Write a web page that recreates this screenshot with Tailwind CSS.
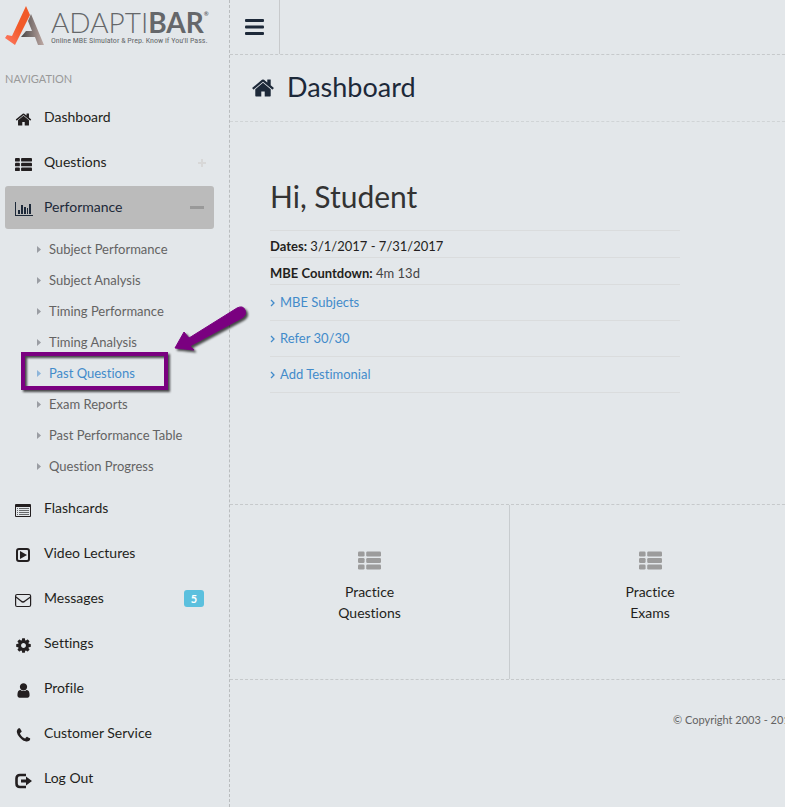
<!DOCTYPE html>
<html lang="en">
<head>
    <meta charset="UTF-8">
    <meta name="viewport" content="width=device-width, initial-scale=1.0">
    <title>Dashboard - AdaptiBar</title>
    <script src="https://cdn.jsdelivr.net/npm/@tailwindcss/browser@4"></script>
</head>
<body class="bg-[#e3e7ea] font-[Lato,sans-serif] [font-variant-ligatures:none] text-[#231f20] overflow-x-hidden">
    <!-- Shared icons -->
    <svg class="hidden">
        <symbol id="home" viewBox="0 0 1792 1792"><path d="M1472 992v480q0 26-19 45t-45 19h-384v-384h-256v384h-384q-26 0-45-19t-19-45v-480q0-1 .5-3t.5-3l575-474 575 474q1 2 1 6zm223-69l-62 74q-8 9-21 11h-3q-13 0-21-7l-692-577-692 577q-12 8-24 7-13-2-21-11l-62-74q-8-10-7-23.5t11-21.5l719-599q32-26 76-26t76 26l244 204v-195q0-14 9-23t23-9h192q14 0 23 9t9 23v408l219 182q10 8 11 21.5t-7 23.5z"/></symbol>
        <symbol id="th-list" viewBox="0 0 1792 1792"><rect x="0" y="200" width="512" height="384" rx="96"/><rect x="640" y="200" width="1152" height="384" rx="96"/><rect x="0" y="704" width="512" height="384" rx="96"/><rect x="640" y="704" width="1152" height="384" rx="96"/><rect x="0" y="1208" width="512" height="384" rx="96"/><rect x="640" y="1208" width="1152" height="384" rx="96"/></symbol>
        <symbol id="caret" viewBox="0 0 4 7"><path d="M0 0l4 3.500l-4 3.500z"/></symbol>
        <symbol id="angle" viewBox="0 0 5 8"><path d="M1 1l3 3l-3 3" fill="none" stroke="currentColor" stroke-width="1.300"/></symbol>
    </svg>

    <div class="flex min-h-screen">
        <!-- Sidebar -->
        <aside class="w-[230px] shrink-0 border-r border-dashed border-[#b9bcbe] pl-[5px] pr-[15px]">
            <a href="#" class="flex h-[54px] gap-[6px] pt-[6px]">
                <svg class="w-10 h-10 shrink-0" viewBox="0 0 40 40">
                    <defs>
                        <linearGradient id="check" x1="0" y1="1" x2="1" y2="0"><stop offset="0" stop-color="#ff7a66"/><stop offset=".5" stop-color="#f15a29"/><stop offset="1" stop-color="#f15a29"/></linearGradient>
                        <linearGradient id="leg" x1="0" y1="0" x2="1" y2="0"><stop offset="0" stop-color="#4a4747"/><stop offset="1" stop-color="#bfaaa5"/></linearGradient>
                    </defs>
                    <path fill="url(#leg)" d="M26 8l13 31h-6l-3-8h-14l5-6h6l-4-10z"/>
                    <path fill="url(#check)" d="M21 0l4 9l-15 30l-10-7l2-3l5 1z"/>
                </svg>
                <span class="flex flex-col pt-[3px] text-[#65676a]">
                    <span class="flex text-[28px] leading-[27px] font-light">ADAPTI<b class="font-bold">BAR</b><sup class="text-[6px] leading-[10px] font-bold top-0">®</sup></span>
                    <span class="font-['Liberation_Sans_Narrow','Roboto_Condensed',sans-serif] text-[8px] leading-[10px] whitespace-nowrap">Online MBE Simulator &amp; Prep. Know if You'll Pass.</span>
                </span>
            </a>
            <h2 class="pt-[18px] pb-[16px] h-[42px] leading-[14px] text-[11px] text-[#999]">NAVIGATION</h2>

            <nav>
                <ul class="flex flex-col gap-[2px] text-[14px]">
                    <li>
                        <a href="#" class="flex items-center h-[43px] px-[10px] pb-[2px] gap-[12px]">
                            <svg class="w-[17px] h-[17px] mt-[6px] fill-current"><use href="#home"/></svg>Dashboard
                        </a>
                    </li>
                    <li>
                        <a href="#" class="flex items-center h-[43px] px-[10px] pb-[2px] gap-[12px]">
                            <svg class="w-[17px] h-[17px] mt-[6px] fill-current"><use href="#th-list"/></svg>
                            <span class="grow">Questions</span>
                            <svg class="w-2 h-2 mt-[2px] mr-[-2px] text-[#d8d8d8]" viewBox="0 0 8 8"><path d="M4 0v8M0 4h8" stroke="currentColor" stroke-width="2"/></svg>
                        </a>
                    </li>
                    <li>
                        <a href="#" class="flex items-center h-[43px] px-[10px] pb-[2px] gap-[12px] rounded-[3px] bg-[#bbb] text-[#1d2939]">
                            <svg class="w-[18px] h-[17px] mt-[6px] mr-[-1px]" viewBox="0 0 18 17" fill="currentColor"><path d="M0 1h1v13h17v1h-18zM3 9h2v4h-2zM6 4h2v9h-2zM9 6h2v7h-2zM12 7h1v6h-1zM14 3h2v10h-2z"/></svg>
                            <span class="grow">Performance</span>
                            <svg class="w-[14px] h-[3px] mt-[2px]"><rect width="14" height="3" fill="#999"/></svg>
                        </a>
                        <ul class="py-[5px] text-[13px] text-[#636363]">
                            <li><a href="#" class="flex items-center h-[31px] pl-8 gap-2"><svg class="w-1 h-[7px] fill-[#9a9da3]"><use href="#caret"/></svg>Subject Performance</a></li>
                            <li><a href="#" class="flex items-center h-[31px] pl-8 gap-2"><svg class="w-1 h-[7px] fill-[#9a9da3]"><use href="#caret"/></svg>Subject Analysis</a></li>
                            <li><a href="#" class="flex items-center h-[31px] pl-8 gap-2"><svg class="w-1 h-[7px] fill-[#9a9da3]"><use href="#caret"/></svg>Timing Performance</a></li>
                            <li><a href="#" class="flex items-center h-[31px] pl-8 gap-2"><svg class="w-1 h-[7px] fill-[#9a9da3]"><use href="#caret"/></svg>Timing Analysis</a></li>
                            <li class="relative">
                                <a href="#" class="flex items-center h-[31px] pl-8 gap-2 text-[#428bca]"><svg class="w-1 h-[7px] fill-[#8db5da]"><use href="#caret"/></svg>Past Questions</a>
                                <!-- Callout box and arrow -->
                                <svg class="absolute left-[16px] top-[-56px] w-[240px] h-[96px] pointer-events-none" viewBox="0 0 240 96">
                                    <g class="drop-shadow-[2px_2px_1px_#000000b0]">
                                        <rect x="2" y="52" width="143" height="34" fill="none" stroke="#7a0080" stroke-width="4"/>
                                        <path fill="#7a0080" d="M154 46l9-16l5 6l48-30q6-3 8 2q2 5-3 8l-52 28l4 4z" stroke="#7a0080" stroke-linejoin="round"/>
                                    </g>
                                </svg>
                            </li>
                            <li><a href="#" class="flex items-center h-[31px] pl-8 gap-2"><svg class="w-1 h-[7px] fill-[#9a9da3]"><use href="#caret"/></svg>Exam Reports</a></li>
                            <li><a href="#" class="flex items-center h-[31px] pl-8 gap-2"><svg class="w-1 h-[7px] fill-[#9a9da3]"><use href="#caret"/></svg>Past Performance Table</a></li>
                            <li><a href="#" class="flex items-center h-[31px] pl-8 gap-2"><svg class="w-1 h-[7px] fill-[#9a9da3]"><use href="#caret"/></svg>Question Progress</a></li>
                        </ul>
                    </li>
                    <li class="-mt-[2px]">
                        <a href="#" class="flex items-center h-[43px] px-[10px] pb-[2px] gap-[12px]">
                            <svg class="w-[17px] h-[17px] mt-[6px]" viewBox="0 0 17 17"><rect x="0" y="2" width="16" height="13" rx="1" fill="currentColor"/><path d="M1 5h14v9h-14z" fill="#e3e7ea"/><path d="M2 6h1v1h-1zM4 6h10v1h-10zM2 8h1v1h-1zM4 8h10v1h-10zM2 10h1v1h-1zM4 10h10v1h-10zM2 12h1v1h-1zM4 12h10v1h-10z" fill="#66686a"/></svg>Flashcards
                        </a>
                    </li>
                    <li>
                        <a href="#" class="flex items-center h-[43px] px-[10px] pb-[2px] gap-[12px]">
                            <svg class="w-[17px] h-[17px] mt-[6px]" viewBox="0 0 17 17"><rect x="2" y="2" width="12" height="12" rx="2" fill="none" stroke="currentColor" stroke-width="2"/><path d="M5 4l7 4l-7 4z" fill="currentColor"/></svg>Video Lectures
                        </a>
                    </li>
                    <li>
                        <a href="#" class="flex items-center h-[43px] px-[10px] pb-[2px] gap-[12px]">
                            <svg class="w-[17px] h-[17px] mt-[6px]" viewBox="0 0 17 17" fill="none" stroke="currentColor"><rect x=".6" y="2.500" width="15" height="12" rx="1.500" stroke-width="1.200"/><path d="M1 5l5 4q2 2 4 0l5.500-4" stroke-width="1.200"/></svg>
                            <span class="grow">Messages</span>
                            <span class="w-5 h-[17px] mt-[2px] rounded-[3px] bg-[#5bc0de] text-center text-[11px] leading-[17px] font-bold text-white">5</span>
                        </a>
                    </li>
                    <li>
                        <a href="#" class="flex items-center h-[43px] px-[10px] pb-[2px] gap-[12px]">
                            <svg class="w-[17px] h-[17px] mt-[6px] fill-current" viewBox="0 0 1792 1792"><path d="M1152 896q0-106-75-181t-181-75-181 75-75 181 75 181 181 75 181-75 75-181zm512-109v222q0 12-8 23t-20 13l-185 28q-19 54-39 91 35 50 107 138 10 12 10 25t-9 23q-27 37-99 108t-94 71q-12 0-26-9l-138-108q-44 23-91 38-16 136-29 186-7 28-36 28h-222q-14 0-24.500-8.500t-11.500-21.500l-28-184q-49-16-90-37l-141 107q-10 9-25 9-14 0-25-11-126-114-165-168-7-10-7-23 0-12 8-23 15-21 51-66.500t54-70.500q-27-50-41-99l-183-27q-13-2-21-12.500t-8-23.500v-222q0-12 8-23t19-13l186-28q14-46 39-92-40-57-107-138-10-12-10-24 0-10 9-23 26-36 98.500-107.500t94.500-71.500q13 0 26 10l138 107q44-23 91-38 16-136 29-186 7-28 36-28h222q14 0 24.500 8.500t11.500 21.500l28 184q49 16 90 37l142-107q9-9 24-9 13 0 25 10 129 119 165 170 7 8 7 22 0 12-8 23-15 21-51 66.500t-54 70.500q26 50 41 98l183 28q13 2 21 12.500t8 23.500z"/></svg>Settings
                        </a>
                    </li>
                    <li>
                        <a href="#" class="flex items-center h-[43px] px-[10px] pb-[2px] gap-[12px]">
                            <svg class="w-[17px] h-[17px] mt-[6px] fill-current" viewBox="0 0 1792 1792"><path d="M1536 1399q0 109-62.500 187t-150.500 78h-854q-88 0-150.500-78t-62.500-187q0-85 8.500-160.500t31.500-152 58.500-131 94-89 134.500-34.500q131 128 313 128t313-128q76 0 134.500 34.500t94 89 58.500 131 31.500 152 8.500 160.500zm-256-887q0 159-112.500 271.500t-271.500 112.500-271.500-112.500-112.500-271.500 112.500-271.500 271.500-112.500 271.500 112.500 112.500 271.500z"/></svg>Profile
                        </a>
                    </li>
                    <li>
                        <a href="#" class="flex items-center h-[43px] px-[10px] pb-[2px] gap-[12px]">
                            <svg class="w-[17px] h-[17px] mt-[6px] fill-current" viewBox="0 0 1792 1792"><path d="M1600 1240q0 27-10 70.500t-21 68.500q-21 50-122 106-94 51-186 51-27 0-53-3.500t-57.500-12.500-47-14.500-55.500-20.500-49-18q-98-35-175-83-127-79-264-216t-216-264q-48-77-83-175-3-9-18-49t-20.500-55.500-14.500-47-12.500-57.500-3.500-53q0-92 51-186 56-101 106-122 25-11 68.500-21t70.500-10q14 0 21 3 18 6 53 76 11 19 30 54t35 63.500 31 53.500q3 4 17.500 25t21.500 35.500 7 28.500q0 20-28.500 50t-62 55-62 53-28.500 46q0 9 5 22.500t8.500 20.500 14 24 11.500 19q76 137 174 235t235 174q2 1 19 11.500t24 14 20.500 8.500 22.500 5q18 0 46-28.500t53-62 55-62 50-28.500q14 0 28.500 7t35.500 21.500 25 17.500q25 15 53.500 31t63.500 35 54 30q70 35 76 53 3 7 3 21z"/></svg>Customer Service
                        </a>
                    </li>
                    <li>
                        <a href="#" class="flex items-center h-[43px] px-[10px] pb-[2px] gap-[12px]">
                            <svg class="w-[17px] h-[17px] mt-[6px]" viewBox="0 0 17 17"><path d="M11 3h-6q-3.500 0-3.500 3.500v5q0 3.500 3.500 3.500h6" fill="none" stroke="currentColor" stroke-width="2.600"/><path d="M6 7.500h5v-3l6 4.500l-6 4.500v-3h-5z" fill="currentColor"/></svg>Log Out
                        </a>
                    </li>
                </ul>
            </nav>
        </aside>

        <!-- Main panel -->
        <main class="grow min-w-[570px]">
            <header class="flex h-[55px] border-b border-dashed border-[#c6c9cb]">
                <button type="button" aria-label="Toggle menu" class="flex w-[50px] items-center justify-center border-r border-[#c8cacc] text-[#1d2939]">
                    <svg class="w-[19px] h-[16px] fill-current" viewBox="0 0 19 16"><rect width="19" height="3" rx="1"/><rect y="6.500" width="19" height="3" rx="1"/><rect y="13" width="19" height="3" rx="1"/></svg>
                </button>
            </header>
            <div class="flex h-[67px] items-center gap-3 border-b border-dashed border-[#d0d4d6] pl-[21px] text-[#1d2939]">
                <svg class="w-6 h-6 fill-current"><use href="#home"/></svg>
                <h1 class="pb-[2px] text-[27px] leading-[40px]">Dashboard</h1>
            </div>

            <section class="h-[382px] pl-10 pt-[54px]">
                <div class="w-[410px] text-[13px]">
                    <h2 class="pb-[14px] text-[30px] leading-[40px] text-[#333]">Hi, Student</h2>
                    <ul class="border-t border-[#dadcdd]">
                        <li class="h-[27px] border-b border-[#dadcdd] pt-[5px] leading-5"><b>Dates:</b> 3/1/2017 - 7/31/2017</li>
                        <li class="h-[27px] border-b border-[#dadcdd] pt-[5px] leading-5"><b>MBE Countdown:</b> <span class="text-[#444]">4m 13d</span></li>
                        <li class="h-9 border-b border-[#dadcdd] text-[#428bca]"><a href="#" class="flex h-[35px] items-center gap-[5px]"><svg class="w-[5px] h-2"><use href="#angle"/></svg>MBE Subjects</a></li>
                        <li class="h-9 border-b border-[#dadcdd] text-[#428bca]"><a href="#" class="flex h-[35px] items-center gap-[5px]"><svg class="w-[5px] h-2"><use href="#angle"/></svg>Refer 30/30</a></li>
                        <li class="h-9 border-b border-[#dadcdd] text-[#428bca]"><a href="#" class="flex h-[35px] items-center gap-[5px]"><svg class="w-[5px] h-2"><use href="#angle"/></svg>Add Testimonial</a></li>
                    </ul>
                </div>
            </section>

            <section class="flex h-[176px] border-y border-dashed border-[#c6c9cb] text-center text-[14px] leading-[21px]">
                <a href="#" class="w-[280px] border-r border-[#c8cccf] pt-[44px]">
                    <svg class="mx-auto mb-[9px] w-[23px] h-[23px] fill-[#9c9c9c]"><use href="#th-list"/></svg>
                    Practice<br>Questions
                </a>
                <a href="#" class="w-[280px] pt-[44px]">
                    <svg class="mx-auto mb-[9px] w-[23px] h-[23px] fill-[#9c9c9c]"><use href="#th-list"/></svg>
                    Practice<br>Exams
                </a>
            </section>

            <footer class="pt-8 pl-[443px] text-[11px] leading-4 text-[#636363] whitespace-nowrap">© Copyright 2003 - 2017</footer>
        </main>
    </div>
</body>
</html>
